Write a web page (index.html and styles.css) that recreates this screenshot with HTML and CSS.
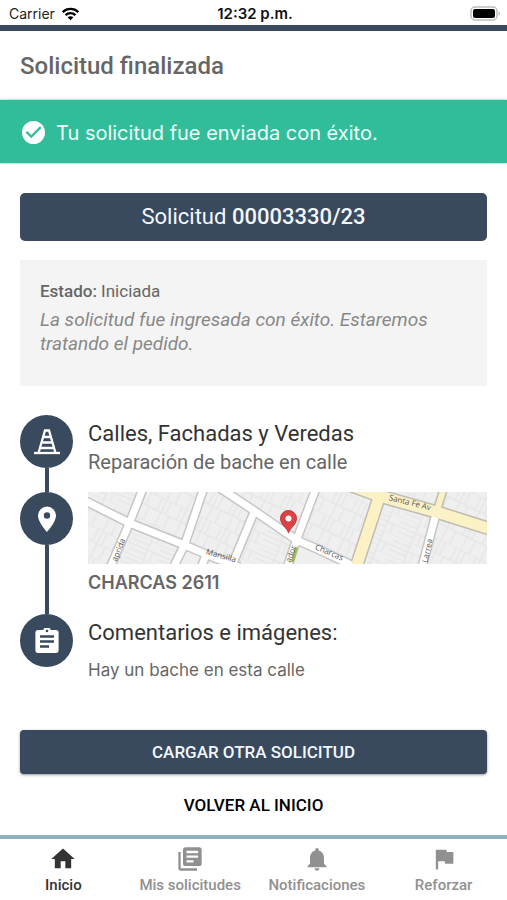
FILE: index.html
```html
<!DOCTYPE html>
<html lang="es">
<head>
<meta charset="utf-8">
<meta name="viewport" content="width=device-width, initial-scale=1">
<title>Solicitud finalizada</title>
<link rel="stylesheet" href="styles.css">
</head>
<body>
<div class="statusbar">
  <div class="carrier">
    <span>Carrier</span>
    <svg class="wifi" viewBox="0 0 20 15" aria-hidden="true"><path d="M1.600 5.400C6.400.9 13.600.9 18.400 5.400M4.700 8.700c3-2.800 7.600-2.800 10.600 0" fill="none" stroke="#000" stroke-width="2.500"/><path d="M6.900 11c1.800-1.600 4.400-1.600 6.200 0L10 14.200z"/></svg>
  </div>
  <strong class="time">12:32 p.m.</strong>
  <svg class="battery" viewBox="0 0 31 15" aria-hidden="true"><rect x="1" y="1" width="26" height="13" rx="4" fill="#fff" stroke="#bdbdbd" stroke-width="1.500"/><rect x="3" y="3" width="22" height="9" rx="2"/><path d="M28.500 5.200c2 1 2 3.600 0 4.600z" fill="#bdbdbd"/></svg>
</div>
<header class="header"><h1>Solicitud finalizada</h1></header>
<div class="notice" role="status">
  <svg class="notice-icon" viewBox="2 2 20 20" aria-hidden="true"><path fill="#fff" d="M12 2a10 10 0 1 0 0 20 10 10 0 0 0 0-20zm-2 15-5-5 1.400-1.400L10 14.200l7.600-7.600L19 8z"/></svg>
  <span>Tu solicitud fue enviada con éxito.</span>
</div>
<main class="content">
  <h2 class="number">Solicitud <strong>00003330/23</strong></h2>
  <section class="state">
    <p class="state-line"><strong>Estado:</strong> Iniciada</p>
    <p class="state-text">La solicitud fue ingresada con éxito. Estaremos tratando el pedido.</p>
  </section>
  <ol class="timeline">
    <li class="step">
      <div class="rail"><span class="dot">
        <svg viewBox="0 0 26 26" aria-hidden="true"><g fill="none" stroke="#fff" stroke-width="2.300"><path d="M0 24h26"/><path d="M4.500 24 11 1.500h4L21.500 24M9.500 8h7M8 13.500h10M6.500 19h13"/></g></svg>
      </span></div>
      <div class="step-body">
        <h3>Calles, Fachadas y Veredas</h3>
        <p class="subtitle">Reparación de bache en calle</p>
      </div>
    </li>
    <li class="step">
      <div class="rail"><span class="dot">
        <svg viewBox="0 0 26 26" aria-hidden="true"><path fill="#fff" fill-rule="evenodd" d="M13 .5a9 9 0 0 0-9 9C4 16.200 13 26 13 26s9-9.800 9-16.500a9 9 0 0 0-9-9zm0 5.800a3.200 3.200 0 1 1 0 6.400 3.200 3.200 0 0 1 0-6.400z"/></svg>
      </span></div>
      <div class="step-body">
        <svg class="map" viewBox="0 0 400 72" preserveAspectRatio="xMidYMid slice" role="img" aria-label="Mapa">
          <defs>
            <pattern id="lots-a" width="30" height="20" patternUnits="userSpaceOnUse" patternTransform="rotate(23)"><path d="M0 0h30M0 5h18M0 10h30M0 15h18M18 0v20M24 10v10"/></pattern>
            <pattern id="lots-b" width="22" height="28" patternUnits="userSpaceOnUse" patternTransform="rotate(26)"><path d="M0 0h22M0 14h22M4 0v14M9 0v28M14 0v14M18 14v14"/></pattern>
            <path id="streets" d="M-6 7 42 31 97 53 125 65 152 75M56-5 42 31 22 77M117-6 97 53 85 77M131-5 167 19 209 48 232 58 270 76M167 19 143 77M119 62 113 77M229-5 209 48 199 77M349 20 334 77"/>
            <path id="avenues" d="M262-7 292 4 349 20 406 38M292 4 268 77"/>
            <path id="spur" d="M357-6 349 20"/>
          </defs>
          <rect width="400" height="72" fill="#efefef"/>
          <g>
            <path fill="url(#lots-a)" d="M0 0h54L42 31 0 10zM42 31 97 53 87 72H24zM167 19 209 48 200 72H145zM292 4 349 20 335 72H270z"/>
            <path fill="url(#lots-b)" d="M0 10 42 31 24 72H0zM54 0h61L97 53 42 31zM115 0h17L167 19 145 72 97 53zM139 0h88L209 48zM227 0h65L270 72 209 48zM292 0h108v36L292 4zM349 20 400 36V72H335z"/>
          </g>
          <g fill="none" stroke-linejoin="round">
            <use href="#streets" stroke="#c6c6c6" stroke-width="10"/>
            <use href="#avenues" stroke="#bfbcb2" stroke-width="14"/>
            <use href="#spur" stroke="#bfbcb2" stroke-width="9"/>
            <use href="#streets" stroke="#fff" stroke-width="7"/>
            <use href="#avenues" stroke="#fbf1c4" stroke-width="11"/>
            <use href="#spur" stroke="#fbf1c4" stroke-width="6"/>
            <path d="M209 55 205 70" stroke="#9dbb58" stroke-width="3"/>
          </g>
          <g class="street-names">
            <text transform="translate(29 70) rotate(-68)">aprida</text>
            <text transform="translate(118 62) rotate(16)">Mansilla</text>
            <text transform="translate(301 8) rotate(14)">Santa Fe Av</text>
            <text transform="translate(227 57) rotate(23)">Charcas</text>
            <text transform="translate(340 71) rotate(-78)">Larrea</text>
            <text transform="translate(203 71) rotate(-70)">ador</text>
          </g>
          <path d="M201 41c-1-5-8-8-8-14.500a8 8 0 0 1 16 0C209 33 202 36 201 41z" fill="#dc4146" stroke="#bd3439" stroke-width="1"/>
          <circle cx="201" cy="26.500" r="3" fill="#fff"/>
        </svg>
        <p class="address">CHARCAS 2611</p>
      </div>
    </li>
    <li class="step">
      <div class="rail"><span class="dot">
        <svg viewBox="0 0 26 26" aria-hidden="true"><path fill="#fff" d="M22 2h-5.200a4 4 0 0 0-7.600 0H4a2.700 2.700 0 0 0-2.600 2.700v17.600A2.700 2.700 0 0 0 4 25h18a2.700 2.700 0 0 0 2.600-2.700V4.700A2.700 2.700 0 0 0 22 2z"/><path d="M6 8.500h14M6 13.500h14M6 18.500h9" stroke="#39495e" stroke-width="2.400"/><circle cx="13" cy="3" r="1.300" fill="#39495e"/></svg>
      </span></div>
      <div class="step-body">
        <h3>Comentarios e imágenes:</h3>
        <p class="comment">Hay un bache en esta calle</p>
      </div>
    </li>
  </ol>
  <div class="actions">
    <button class="btn primary" type="button">CARGAR OTRA SOLICITUD</button>
    <button class="btn plain" type="button">VOLVER AL INICIO</button>
  </div>
</main>
<nav class="tabs">
  <a class="tab active" href="#inicio"><svg viewBox="0 0 24 24" aria-hidden="true"><path d="M10 20v-6h4v6h5v-8h3L12 3 2 12h3v8z"/></svg>Inicio</a>
  <a class="tab" href="#solicitudes"><svg viewBox="0 0 24 24" aria-hidden="true"><path d="M4 6H2v14c0 1.100.9 2 2 2h14v-2H4V6zm16-4H8c-1.100 0-2 .9-2 2v12c0 1.100.9 2 2 2h12c1.100 0 2-.9 2-2V4c0-1.100-.9-2-2-2zm-1 9H9V9h10v2zm-4 4H9v-2h6v2zm4-8H9V5h10v2z"/></svg>Mis solicitudes</a>
  <a class="tab" href="#notificaciones"><svg viewBox="0 0 24 24" aria-hidden="true"><path d="M12 22c1.100 0 2-.9 2-2h-4c0 1.100.9 2 2 2zm6-6v-5c0-3.070-1.640-5.640-4.500-6.320V4a1.500 1.500 0 0 0-3 0v.68C7.630 5.360 6 7.920 6 11v5l-2 2v1h16v-1l-2-2z"/></svg>Notificaciones</a>
  <a class="tab" href="#reforzar"><svg viewBox="0 0 24 24" aria-hidden="true"><path d="M14.400 6 14 4H5v17h2v-7h5.600l.4 2h7V6z"/></svg>Reforzar</a>
</nav>
</body>
</html>
```

FILE: styles.css
```css
* { box-sizing: border-box; }
body {
  margin: 0;
  min-height: 100vh;
  display: flex;
  flex-direction: column;
  background: #fff;
  color: #666;
  font-family: Roboto, sans-serif;
}
h1, h2, h3, p, ol { margin: 0; padding: 0; font-weight: 400; }
strong { font-weight: 500; }
svg { display: block; }

.statusbar {
  display: grid;
  grid-template-columns: 1fr auto 1fr;
  align-items: center;
  height: 31px;
  padding: 2px 6px 0 9px;
  border-bottom: 6px solid #39495e;
  color: #222;
  font: 14px/23px Inter, sans-serif;
}
.carrier { display: flex; align-items: center; gap: 6px; }
.wifi { width: 19px; height: 14px; }
.time { font-size: 15px; font-weight: 600; color: #111; }
.battery { width: 31px; height: 15px; justify-self: end; }

.header { padding: 20px 20px 19px; }
.header h1 { font-size: 24px; line-height: 30px; font-weight: 500; }

.notice {
  display: flex;
  align-items: center;
  gap: 11px;
  height: 63px;
  padding: 2px 22px 0;
  background: #31bd9a;
  box-shadow: 0 0 2px #31bd9a;
  color: #effffa;
  font: 20px/28px Inter, sans-serif;
}
.notice-icon { width: 23px; height: 23px; }

.content { flex: 1; padding: 30px 20px 8px; }
.number {
  padding: 10px 16px;
  border-radius: 5px;
  background: #39495e;
  color: #f2f8ff;
  font-size: 22px;
  line-height: 28px;
  text-align: center;
}
.state { margin-top: 19px; padding: 19px 20px 30px; background: #f4f4f4; }
.state-line { font-size: 17px; line-height: 24px; }
.state-text {
  margin-top: 5px;
  color: #888;
  font-size: 19px;
  line-height: 24px;
  font-style: italic;
}

.timeline { margin-top: 29px; list-style: none; }
.step { display: grid; grid-template-columns: 53px minmax(0, 1fr); column-gap: 15px; }
.rail { display: flex; flex-direction: column; align-items: center; }
.step:not(:last-child) .rail::after { content: ""; flex: 1; width: 4px; background: #39495e; }
.dot {
  display: grid;
  place-items: center;
  width: 53px;
  height: 53px;
  border-radius: 50%;
  background: #39495e;
}
.dot svg { width: 26px; height: 26px; }
.step h3 { padding-top: 5px; color: #333; font-size: 22px; line-height: 28px; }
.subtitle { font-size: 20px; line-height: 28px; padding-bottom: 16px; }
.map { width: 100%; height: 72px; }
#lots-a path, #lots-b path { fill: none; stroke: #e2e2e2; stroke-width: 1; }
.street-names { fill: #555; font: 8px "Open Sans", sans-serif; }
.address { padding: 7px 0 19px; font: 600 18px/24px Inter, sans-serif; }
.comment { margin-top: 11px; font: 17px/24px Inter, sans-serif; }

.actions { margin-top: 48px; }
.btn {
  display: block;
  width: 100%;
  height: 44px;
  border: 0;
  border-radius: 4px;
  font: 500 17px/24px Roboto, sans-serif;
}
.primary { background: #39495e; color: #f2f8ff; box-shadow: 0 1px 3px #0006; }
.plain { margin-top: 9px; background: none; color: #000; }

.tabs {
  display: grid;
  grid-template-columns: repeat(4, 1fr);
  border-top: 4px solid #8fb0bd;
  padding: 6px 0 5px;
}
.tab {
  display: flex;
  flex-direction: column;
  align-items: center;
  gap: 2px;
  color: #909090;
  font-size: 15px;
  line-height: 20px;
  font-weight: 500;
  text-decoration: none;
}
.tab svg { width: 28px; height: 28px; fill: currentColor; }
.active { color: #333; }
```
